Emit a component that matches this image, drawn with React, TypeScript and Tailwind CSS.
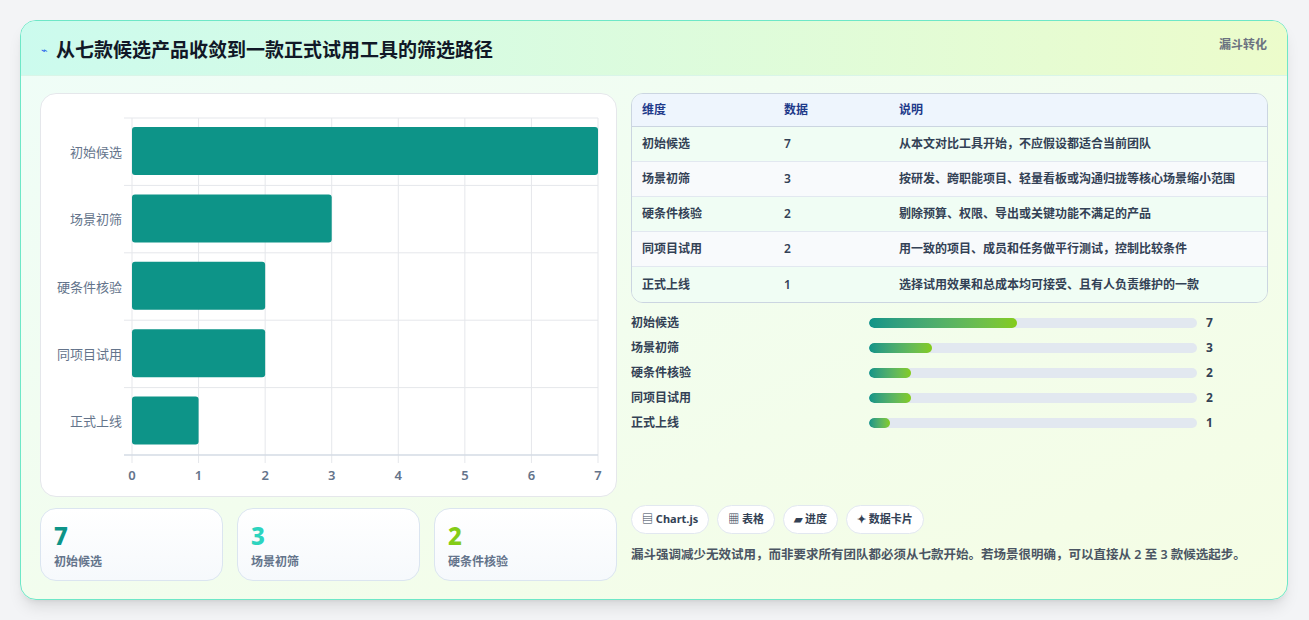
import React from "react";

const rows = [
  { k: "初始候选", v: 7, d: "从本文对比工具开始，不应假设都适合当前团队" },
  { k: "场景初筛", v: 3, d: "按研发、跨职能项目、轻量看板或沟通归拢等核心场景缩小范围" },
  { k: "硬条件核验", v: 2, d: "剔除预算、权限、导出或关键功能不满足的产品" },
  { k: "同项目试用", v: 2, d: "用一致的项目、成员和任务做平行测试，控制比较条件" },
  { k: "正式上线", v: 1, d: "选择试用效果和总成本均可接受、且有人负责维护的一款" },
];

const font = { fontFamily: '"Noto Sans", "Noto Sans CJK SC", sans-serif' };

function Chart() {
  const x0 = 91, x1 = 557, y0 = 24, y1 = 361;
  const sx = (v: number) => x0 + ((x1 - x0) * v) / 7;
  const band = (y1 - y0) / 5;
  return (
    <svg width="577" height="402" viewBox="0 0 577 402">
      {Array.from({ length: 8 }).map((_, i) => (
        <line key={i} x1={sx(i)} x2={sx(i)} y1={y0} y2={y1 + 8} stroke="#e5e7eb" />
      ))}
      {Array.from({ length: 6 }).map((_, i) => (
        <line key={i} x1={x0 - 8} x2={x1} y1={y0 + band * i} y2={y0 + band * i} stroke="#e5e7eb" />
      ))}
      <line x1={x0 - 8} x2={x1} y1={y1} y2={y1} stroke="#cbd5e1" />
      {rows.map((r, i) => (
        <g key={r.k}>
          <rect x={x0} y={y0 + band * i + 9} width={sx(r.v) - x0} height={48} rx={3} fill="#0d9488" />
          <text x={81} y={y0 + band * i + band / 2 + 5} textAnchor="end" fontSize="13" fill="#64748b" style={font}>{r.k}</text>
        </g>
      ))}
      {Array.from({ length: 8 }).map((_, i) => (
        <text key={i} x={sx(i)} y={386} textAnchor="middle" fontSize="13" fontWeight="600" fill="#64748b" style={font}>{i}</text>
      ))}
    </svg>
  );
}

export default function App() {
  return (
    <div className="w-[1309px] h-[620px] bg-[#f3f4f6] pt-[20px] pl-[20px]" style={font}>
      <div className="w-[1268px] h-[580px] rounded-2xl border border-[#6ee7c7] bg-gradient-to-br from-[#effdf8] to-[#f5fde4] shadow-lg overflow-hidden flex flex-col">
        <div className="h-[55px] shrink-0 flex justify-between items-start px-[20px] bg-gradient-to-r from-[#ccfbee] to-[#ecfccb] border-b border-[#d9f5e8]">
          <div className="flex items-center gap-2 pt-[15px]">
            <span className="text-[#2563eb] text-[11px]">⌁</span>
            <span className="text-[19px] font-bold text-[#111827]">从七款候选产品收敛到一款正式试用工具的筛选路径</span>
          </div>
          <span className="pt-[15px] text-[12px] font-bold text-[#6b7280]">漏斗转化</span>
        </div>
        <div className="flex gap-[14px] px-[19px] pt-[17px]">
          <div className="w-[577px] flex flex-col gap-[11px]">
            <div className="h-[404px] bg-white rounded-2xl border border-[#e5e7eb] overflow-hidden">
              <Chart />
            </div>
            <div className="grid grid-cols-3 gap-[14px]">
              {[["7", "text-[#0d9488]", "初始候选"], ["3", "text-[#2dd4bf]", "场景初筛"], ["2", "text-[#84cc16]", "硬条件核验"]].map(([n, c, l]) => (
                <div key={l} className="h-[73px] rounded-2xl border border-[#dbe5f0] bg-gradient-to-b from-white to-[#f6f9fc] px-[13px] pt-[12px]">
                  <div className={`text-[24px] font-extrabold leading-[30px] ${c}`}>{n}</div>
                  <div className="text-[12px] font-semibold text-[#64748b] mt-[2px]">{l}</div>
                </div>
              ))}
            </div>
          </div>
          <div className="w-[638px] flex flex-col">
            <div className="rounded-xl border border-[#cbd5e1] overflow-hidden text-[12px]">
              <div className="flex h-[33px] items-center bg-[#eef5fd] font-bold text-[#1e3a8a] border-b border-[#cbd5e1]">
                <div className="w-[152px] pl-[10px]">维度</div>
                <div className="w-[115px]">数据</div>
                <div>说明</div>
              </div>
              {rows.map((r, i) => (
                <div key={r.k} className={`flex h-[35px] items-center font-semibold text-[#334155] ${i < 4 ? "border-b border-[#e2e8f0]" : ""} ${i % 2 ? "bg-[#f8fafc]" : "bg-[#f0fdf4]"}`}>
                  <div className="w-[152px] pl-[10px]">{r.k}</div>
                  <div className="w-[115px]">{r.v}</div>
                  <div>{r.d}</div>
                </div>
              ))}
            </div>
            <div className="flex flex-col gap-[7px] mt-[11px]">
              {rows.map((r) => (
                <div key={r.k} className="flex items-center h-[18px] text-[12px] font-bold text-[#334155]">
                  <div className="w-[238px]">{r.k}</div>
                  <div className="w-[328px] h-[10px] rounded-full bg-[#e2e8f0] overflow-hidden">
                    <div className="h-full rounded-full bg-gradient-to-r from-[#0d9488] to-[#84cc16]" style={{ width: `${(r.v / 7) * 45}%` }} />
                  </div>
                  <div className="ml-[9px]">{r.v}</div>
                </div>
              ))}
            </div>
            <div className="flex gap-[8px] mt-[73px]">
              {["▤ Chart.js", "▦ 表格", "▰ 进度", "✦ 数据卡片"].map((t) => (
                <span key={t} className="h-[29px] px-[10px] flex items-center rounded-full border border-[#e2e8f0] bg-white text-[11px] font-bold text-[#334155]">{t}</span>
              ))}
            </div>
            <p className="mt-[11px] text-[12.5px] leading-[20px] font-semibold text-[#4b5563] pr-[20px]">
              漏斗强调减少无效试用，而非要求所有团队都必须从七款开始。若场景很明确，可以直接从 2 至 3 款候选起步。
            </p>
          </div>
        </div>
      </div>
    </div>
  );
}
